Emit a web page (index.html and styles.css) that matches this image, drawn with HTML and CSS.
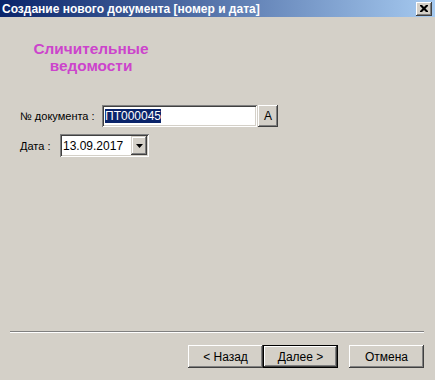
FILE: index.html
```html
<!DOCTYPE html>
<html>
<head>
<meta charset="utf-8">
<link rel="stylesheet" href="styles.css">
</head>
<body>
<div class="window">
  <div class="titlebar">
    <span class="title">Создание нового документа [номер и дата]</span>
    <span class="close"><svg width="8" height="7" viewBox="0 0 8 7"><path d="M0 0h2l2 2 2-2h2v1l-2.5 2.5L8 6v1H6L4 5 2 7H0V6l2.5-2.5L0 1z" fill="#000"/></svg></span>
  </div>
  <div class="heading">Сличительные<br>ведомости</div>
  <div class="row row1">
    <label class="lbl lbl-num">№ документа :</label>
    <div class="field field-num"><span class="sel">ПТ000045</span></div>
    <div class="btn btn-a">А</div>
  </div>
  <div class="row row2">
    <label class="lbl lbl-date">Дата :</label>
    <div class="field combo"><span class="val">13.09.2017</span><span class="drop"><svg width="7" height="4" viewBox="0 0 7 4"><path d="M0 0h7L3.5 4z" fill="#000"/></svg></span></div>
  </div>
  <div class="spacer"></div>
  <div class="sep"></div>
  <div class="buttons">
    <div class="btn wide">&lt; Назад</div>
    <div class="btn wide default">Далее &gt;</div>
    <div class="btn wide cancel">Отмена</div>
  </div>
</div>
</body>
</html>
```
FILE: styles.css
```css
html, body {
  margin: 0;
  padding: 0;
  background: #d4d0c8;
}
.window {
  width: 435px;
  height: 380px;
  display: flex;
  flex-direction: column;
  background: #d4d0c8;
  font-family: "Liberation Sans", Arial, sans-serif;
  font-size: 11px;
  color: #000;
  overflow: hidden;
}
.titlebar {
  height: 17px;
  flex: none;
  display: flex;
  align-items: center;
  justify-content: space-between;
  padding: 0 3px 0 2px;
  background: linear-gradient(to right, #0a246a, #a6caf0);
}
.title {
  color: #fff;
  font-weight: bold;
  font-size: 12px;
  white-space: nowrap;
}
.close {
  width: 16px;
  height: 14px;
  box-sizing: border-box;
  background: #d4d0c8;
  display: flex;
  align-items: center;
  justify-content: center;
  box-shadow: inset -1px -1px 0 #404040, inset 1px 1px 0 #fff, inset -2px -2px 0 #808080;
}
.heading {
  margin: 23px 0 0 10px;
  width: 162px;
  text-align: center;
  color: #cc44cc;
  font-weight: bold;
  font-size: 15.4px;
  line-height: 17px;
}
.row {
  display: flex;
  align-items: center;
  padding-left: 20px;
}
.row1 {
  margin-top: 31px;
}
.row2 {
  margin-top: 7px;
}
.lbl {
  font-size: 11px;
}
.lbl-num {
  width: 82px;
}
.lbl-date {
  width: 40px;
}
.field {
  box-sizing: border-box;
  height: 22px;
  background: #fff;
  box-shadow: inset 1px 1px 0 #808080, inset -1px -1px 0 #fff, inset 2px 2px 0 #404040, inset -2px -2px 0 #d4d0c8;
  display: flex;
  align-items: center;
  padding-left: 3px;
  font-size: 12px;
}
.field-num {
  width: 155px;
}
.sel {
  background: #0a246a;
  color: #fff;
  line-height: 14px;
}
.combo {
  width: 89px;
  height: 23px;
  justify-content: space-between;
  padding-right: 2px;
  color: #000;
}
.drop {
  width: 16px;
  height: 19px;
  box-sizing: border-box;
  background: #d4d0c8;
  display: flex;
  align-items: center;
  justify-content: center;
  box-shadow: inset -1px -1px 0 #404040, inset 1px 1px 0 #d4d0c8, inset -2px -2px 0 #808080, inset 2px 2px 0 #fff;
}
.btn {
  box-sizing: border-box;
  background: #d4d0c8;
  display: flex;
  align-items: center;
  justify-content: center;
  font-size: 12px;
  box-shadow: inset -1px -1px 0 #404040, inset 1px 1px 0 #fff, inset -2px -2px 0 #808080;
}
.btn-a {
  width: 20px;
  height: 22px;
  margin-left: 1px;
}
.spacer {
  flex: 1;
}
.sep {
  flex: none;
  height: 0;
  margin: 0 11px 0 10px;
  border-top: 1px solid #808080;
  border-bottom: 1px solid #fff;
}
.buttons {
  flex: none;
  display: flex;
  justify-content: flex-end;
  padding: 12px 11px 12px 0;
}
.wide {
  width: 75px;
  height: 23px;
}
.default {
  box-shadow: inset 0 0 0 1px #000, inset -2px -2px 0 #404040, inset 2px 2px 0 #fff, inset -3px -3px 0 #808080;
}
.cancel {
  margin-left: 11px;
}
```
